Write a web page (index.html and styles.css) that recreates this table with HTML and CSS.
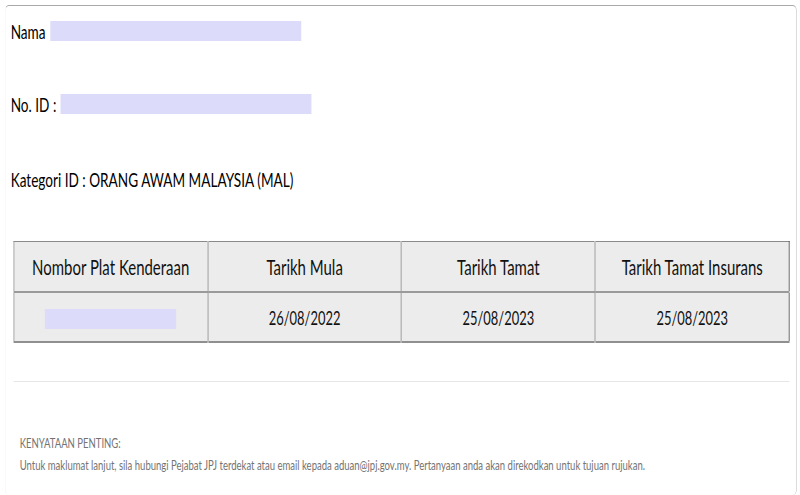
FILE: index.html
```html
<!DOCTYPE html>
<html lang="ms">
<head>
<meta charset="utf-8">
<title>Maklumat Kenderaan</title>
<link rel="stylesheet" href="styles.css">
</head>
<body>
<div class="page">
  <div class="card">
    <div class="info-row"><span class="label">Nama</span><span class="mask mask-name"></span></div>
    <div class="info-row"><span class="label">No. ID :</span><span class="mask mask-id"></span></div>
    <div class="info-row"><span class="label">Kategori ID : ORANG AWAM MALAYSIA (MAL)</span></div>

    <table class="vehicles">
      <thead>
        <tr>
          <th>Nombor Plat Kenderaan</th>
          <th>Tarikh Mula</th>
          <th>Tarikh Tamat</th>
          <th>Tarikh Tamat Insurans</th>
        </tr>
      </thead>
      <tbody>
        <tr>
          <td><span class="mask mask-plate"></span></td>
          <td>26/08/2022</td>
          <td>25/08/2023</td>
          <td>25/08/2023</td>
        </tr>
      </tbody>
    </table>

    <hr class="divider">

    <div class="notice">
      <p class="notice-title">KENYATAAN PENTING:</p>
      <p class="notice-text">Untuk maklumat lanjut, sila hubungi Pejabat JPJ terdekat atau email kepada aduan@jpj.gov.my. Pertanyaan anda akan direkodkan untuk tujuan rujukan.</p>
    </div>
  </div>
</div>
</body>
</html>
```

FILE: styles.css
```css
:root {
  --s: 0.68;
}

html, body {
  margin: 0;
  padding: 0;
  background: #ffffff;
  overflow: hidden;
  width: 800px;
  height: 495px;
}

.page {
  width: calc(798px / var(--s));
  height: 495px;
  overflow: hidden;
  transform: scaleX(var(--s));
  transform-origin: 0 0;
  font-family: Lato, "Noto Sans", sans-serif;
  color: #000000;
}

.card {
  margin-left: calc(5px / var(--s));
  margin-top: 5px;
  width: calc(792px / var(--s));
  height: 490px;
  box-sizing: border-box;
  border-top: 1px solid #a9a9a9;
  border-right: 1px solid #c8c8c8;
  border-left: 1px solid #f2f2f2;
  border-radius: 6px;
  padding: 11px calc(7px / var(--s)) 0 calc(8px / var(--s));
}

.info-row {
  display: flex;
  align-items: center;
  height: 28px;
  margin-left: calc(-3px / var(--s));
  font-size: 20px;
  line-height: 28px;
  white-space: nowrap;
}

.info-row + .info-row {
  margin-top: 45px;
}

.info-row:nth-child(3) {
  margin-top: 47px;
}

.mask {
  display: inline-block;
  height: 20px;
  background: #dcdcfa;
}

.mask-name {
  width: calc(251px / var(--s));
  margin-left: calc(5px / var(--s));
}

.mask-id {
  width: calc(251px / var(--s));
  margin-left: calc(4px / var(--s));
}

.mask-plate {
  width: calc(131px / var(--s));
  vertical-align: middle;
}

.vehicles {
  margin-top: 48px;
  width: 100%;
  table-layout: fixed;
  border-collapse: collapse;
  background: #ececec;
  border-top: 1px solid #8a8a8a;
  border-left: 1px solid #8a8a8a;
  border-right: 1px solid #333333;
  border-bottom: 2px solid #8f8f8f;
}

.vehicles th,
.vehicles td {
  text-align: center;
  vertical-align: middle;
  padding: 0;
  border-right: 2px solid #b4b4b4;
  color: #111111;
}

.vehicles th {
  height: 49px;
  font-size: 22px;
  font-weight: 400;
  border-bottom: 2px solid #9a9a9a;
}

.vehicles td {
  height: 48px;
  font-size: 19px;
}

.vehicles th:last-child,
.vehicles td:last-child {
  border-right: none;
}

.divider {
  margin: 38px 0 0;
  border: none;
  border-top: 1px solid #e6e6e6;
  height: 0;
}

.notice {
  margin-top: 50px;
  margin-left: calc(6px / var(--s));
  color: #737373;
  font-size: 14px;
}

.notice p {
  margin: 0;
  line-height: 22px;
  white-space: nowrap;
}
```
